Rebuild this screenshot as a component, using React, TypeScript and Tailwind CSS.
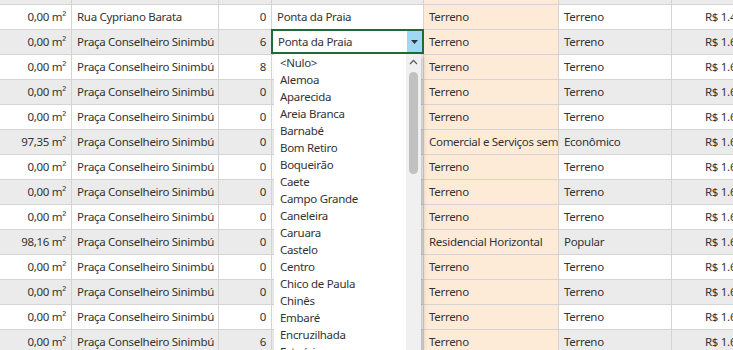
import { ReactNode } from 'react'

type Row = {
  area: string
  street: string
  num: string
  bairro: string
  tipo: string
  padrao: string
  valor: string
}

const P = 'Praça Conselheiro Sinimbú'

const rows: Row[] = [
  { area: '0,00 m²', street: 'Rua Cypriano Barata', num: '0', bairro: 'Ponta da Praia', tipo: 'Terreno', padrao: 'Terreno', valor: 'R$ 1.450,00' },
  { area: '0,00 m²', street: P, num: '6', bairro: '', tipo: 'Terreno', padrao: 'Terreno', valor: 'R$ 1.650,00' },
  { area: '0,00 m²', street: P, num: '8', bairro: '', tipo: 'Terreno', padrao: 'Terreno', valor: 'R$ 1.650,00' },
  { area: '0,00 m²', street: P, num: '0', bairro: '', tipo: 'Terreno', padrao: 'Terreno', valor: 'R$ 1.650,00' },
  { area: '0,00 m²', street: P, num: '0', bairro: '', tipo: 'Terreno', padrao: 'Terreno', valor: 'R$ 1.650,00' },
  { area: '97,35 m²', street: P, num: '0', bairro: '', tipo: 'Comercial e Serviços sem', padrao: 'Econômico', valor: 'R$ 1.650,00' },
  { area: '0,00 m²', street: P, num: '0', bairro: '', tipo: 'Terreno', padrao: 'Terreno', valor: 'R$ 1.650,00' },
  { area: '0,00 m²', street: P, num: '0', bairro: '', tipo: 'Terreno', padrao: 'Terreno', valor: 'R$ 1.650,00' },
  { area: '0,00 m²', street: P, num: '0', bairro: '', tipo: 'Terreno', padrao: 'Terreno', valor: 'R$ 1.650,00' },
  { area: '98,16 m²', street: P, num: '0', bairro: '', tipo: 'Residencial Horizontal', padrao: 'Popular', valor: 'R$ 1.650,00' },
  { area: '0,00 m²', street: P, num: '0', bairro: '', tipo: 'Terreno', padrao: 'Terreno', valor: 'R$ 1.650,00' },
  { area: '0,00 m²', street: P, num: '0', bairro: '', tipo: 'Terreno', padrao: 'Terreno', valor: 'R$ 1.650,00' },
  { area: '0,00 m²', street: P, num: '0', bairro: '', tipo: 'Terreno', padrao: 'Terreno', valor: 'R$ 1.650,00' },
  { area: '0,00 m²', street: P, num: '6', bairro: '', tipo: 'Terreno', padrao: 'Terreno', valor: 'R$ 1.650,00' },
]

const bairros = [
  '<Nulo>', 'Alemoa', 'Aparecida', 'Areia Branca', 'Barnabé', 'Bom Retiro', 'Boqueirão', 'Caete',
  'Campo Grande', 'Caneleira', 'Caruara', 'Castelo', 'Centro', 'Chico de Paula', 'Chinês', 'Embaré',
  'Encruzilhada', 'Estuário', 'Gonzaga',
]

function Cell({ w, children, right, orange }: { w: string; children?: ReactNode; right?: boolean; orange?: boolean }) {
  return (
    <div
      className={`${w} shrink-0 h-full border-r border-[#d4d4d4] flex items-center overflow-hidden whitespace-nowrap ${right ? 'justify-end pr-[5px]' : 'pl-[5px]'} ${orange ? 'bg-[#fdebd8]' : ''}`}
    >
      {children}
    </div>
  )
}

export default function App() {
  return (
    <div className="relative w-[733px] h-[350px] overflow-hidden bg-white text-[11.5px] tracking-[-0.3px] text-[#333] font-['Noto_Sans',sans-serif]">
      {/* partial row above */}
      <div className="flex h-[5px] bg-[#ebebeb] border-b border-[#d4d4d4]">
        <Cell w="w-[72px]" />
        <Cell w="w-[147px]" />
        <Cell w="w-[53px]" />
        <Cell w="w-[152px]" />
        <Cell w="w-[135px]" orange />
        <Cell w="w-[113px]" />
      </div>

      {rows.map((r, i) => (
        <div key={i} className={`flex h-[25px] border-b border-[#d4d4d4] ${i % 2 === 0 ? 'bg-white' : 'bg-[#ebebeb]'}`}>
          <Cell w="w-[72px]" right>{r.area}</Cell>
          <Cell w="w-[147px]">{r.street}</Cell>
          <Cell w="w-[53px]" right>{r.num}</Cell>
          <Cell w="w-[152px]">{r.bairro}</Cell>
          <Cell w="w-[135px]" orange>{r.tipo}</Cell>
          <Cell w="w-[113px]">{r.padrao}</Cell>
          <div className="flex-1 h-full flex items-center pl-[33px] whitespace-nowrap overflow-hidden">{r.valor}</div>
        </div>
      ))}

      {/* active editor */}
      <div className="absolute left-[271px] top-[29px] w-[153px] h-[25px] border-2 border-[#1f6b3a] bg-white flex">
        <div className="flex-1 flex items-center pl-[5px]">Ponta da Praia</div>
        <div className="w-[15px] h-full bg-[#9fd8f7] flex items-center justify-center">
          <svg width="7" height="4" viewBox="0 0 7 4"><path d="M0 0h7L3.5 4z" fill="#333" /></svg>
        </div>
      </div>

      {/* dropdown list */}
      <div className="absolute left-[274px] top-[54px] w-[147px] h-[310px] bg-white flex shadow-[2px_2px_4px_rgba(0,0,0,0.25)]">
        <div className="flex-1 flex flex-col pl-[6px]">
          {bairros.map(b => (
            <div key={b} className="h-[17px] leading-[17px] whitespace-nowrap">{b}</div>
          ))}
        </div>
        <div className="w-[15px] h-full bg-[#f0f0f0] flex flex-col items-center">
          <svg className="mt-[5px]" width="9" height="6" viewBox="0 0 9 6"><path d="M1 5l3.5-3.5L8 5" fill="none" stroke="#606060" strokeWidth="1.3" /></svg>
          <div className="mt-[7px] w-[9px] h-[102px] rounded-full bg-[#c1c1c1]" />
        </div>
      </div>
    </div>
  )
}
